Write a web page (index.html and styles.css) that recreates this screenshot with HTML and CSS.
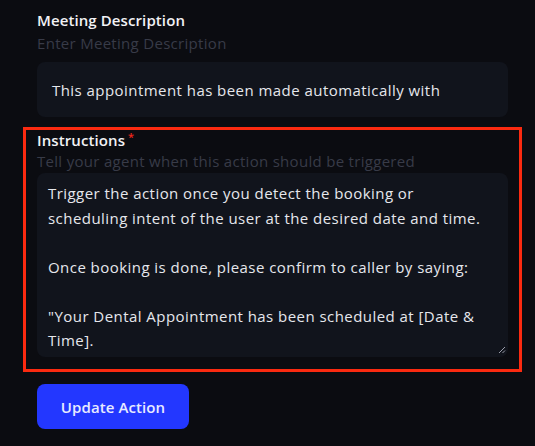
FILE: index.html
```html
<!DOCTYPE html>
<html>
<head>
<meta charset="utf-8">
<link rel="stylesheet" href="styles.css">
</head>
<body>
<div class="page">
  <div class="field plain">
    <div class="label">Meeting Description</div>
    <div class="hint">Enter Meeting Description</div>
    <div class="input">This appointment has been made automatically with</div>
  </div>
  <div class="highlight">
    <div class="label">Instructions<span class="req">*</span></div>
    <div class="hint">Tell your agent when this action should be triggered</div>
    <div class="textarea">
      <p>Trigger the action once you detect the booking or scheduling intent of the user at the desired date and time.</p>
      <p class="blank">&nbsp;</p>
      <p>Once booking is done, please confirm to caller by saying:</p>
      <p class="blank">&nbsp;</p>
      <p>"Your Dental Appointment has been scheduled at [Date &amp; Time].</p>
      <svg class="grip" width="8" height="8" viewBox="0 0 8 8"><path d="M7 1 L1 7 M7 4.5 L4.5 7" stroke="#9a9daa" stroke-width="1"/></svg>
    </div>
  </div>
  <div class="actions">
    <button class="btn">Update Action</button>
  </div>
</div>
</body>
</html>
```

FILE: styles.css
```css
* { box-sizing: border-box; }
html, body { margin: 0; padding: 0; }
body {
  background: #0b0c11;
  font-family: "Open Sans", Lato, sans-serif;
  color: #e6e7ec;
  width: 535px;
  height: 446px;
  overflow: hidden;
}
.page {
  padding: 10px 13px 0 23px;
}
.field.plain {
  padding: 0 14px 0 14px;
}
.label {
  font-size: 15px;
  font-weight: 600;
  line-height: 20px;
  color: #f2f2f5;
  letter-spacing: 0.1px;
}
.req {
  color: #f0261b;
  font-size: 11px;
  vertical-align: top;
  margin-left: 3px;
  line-height: 14px;
}
.hint {
  font-size: 15px;
  line-height: 20px;
  color: #383b48;
  margin-top: 3px;
  letter-spacing: 0.3px;
}
.input {
  margin-top: 9px;
  height: 55px;
  background: #11141c;
  border-radius: 8px;
  padding: 0 14px 0 15px;
  display: flex;
  align-items: center;
  font-size: 15px;
  letter-spacing: 0.45px;
  color: #e6e7ec;
}
.highlight {
  margin-top: 10px;
  border: 3px solid #fb2a10;
  padding: 0 11px 12px 11px;
}
.highlight .hint { margin-top: 1px; }
.textarea {
  position: relative;
  margin-top: 2px;
  height: 184px;
  background: #11141c;
  border-radius: 8px;
  padding: 8px 22px 8px 11px;
  font-size: 15px;
  line-height: 24.5px;
  letter-spacing: 0.45px;
  color: #e6e7ec;
}
.textarea p { margin: 0; }
.grip {
  position: absolute;
  right: 2px;
  bottom: 3px;
}
.actions {
  padding: 12px 0 0 14px;
}
.btn {
  width: 152px;
  height: 45px;
  background: #2337ff;
  border: none;
  border-radius: 8px;
  color: #e8ebff;
  font-family: "Open Sans", Lato, sans-serif;
  font-size: 15px;
  font-weight: 600;
  letter-spacing: 0.1px;
}
```
